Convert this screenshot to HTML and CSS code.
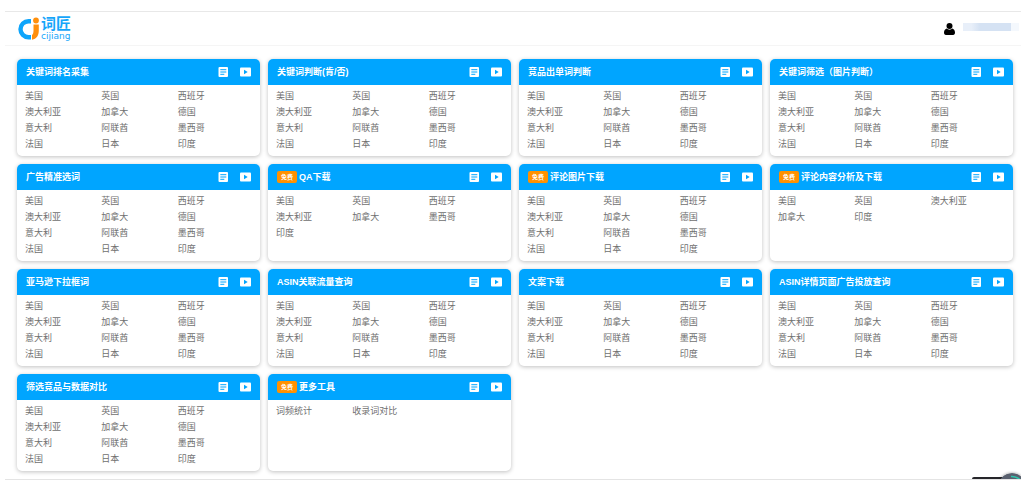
FILE: index.html
```html
<!DOCTYPE html>
<html lang="zh-CN">
<head>
<meta charset="utf-8">
<meta name="viewport" content="width=device-width, initial-scale=1">
<title>词匠</title>
<link rel="stylesheet" href="styles.css">
</head>
<body>
<div class="frame">
  <header class="topbar">
    <a class="logo" href="#" aria-label="词匠 cijiang">
      <svg class="logo-mark" viewBox="0 0 22 24" aria-hidden="true">
        <path d="M14 4.200H11.500A8 8 0 0 0 11.500 20.200H14" fill="none" stroke="#0ea5fb" stroke-width="4.400"/>
        <circle cx="19" cy="3.500" r="2.900" fill="#ff8f0c"/>
        <path d="M16.500 7.400h5.300v6c0 5-2.300 8.300-6.800 9.300v-4.600c1.100-1 1.500-2.400 1.500-4.600z" fill="#ff8f0c"/>
      </svg>
      <span class="logo-text">
        <span class="logo-name">词匠</span>
        <span class="logo-latin">cijiang</span>
      </span>
    </a>
    <div class="user">
      <svg class="user-icon" viewBox="0 0 11 12" aria-hidden="true">
        <circle cx="5.500" cy="3" r="3"/>
        <path d="M2.500 5.500C1 6.200 0 7.500 0 9.500 0 11 .6 12 2 12h7c1.400 0 2-1 2-2.500 0-2-1-3.300-2.500-4C7 7 4 7 2.500 5.500z"/>
      </svg>
      <span class="user-name"></span>
    </div>
  </header>
  <main class="tools" id="tools"></main>
  <div class="helper" aria-hidden="true">
    <span class="helper-bar"></span>
    <svg class="helper-ball" viewBox="0 0 28 28">
      <circle cx="14" cy="14" r="14" fill="#59606e"/>
      <path d="M13 3.500q6-.5 11 5" fill="none" stroke="#2fc7ae" stroke-width="1.500"/>
    </svg>
  </div>
</div>
<script src="tools.js"></script>
</body>
</html>
```
FILE: styles.css
```css
* {
  box-sizing: border-box;
}

body {
  margin: 0;
  padding: 11px 11px 0 5px;
  background: #fff;
  color: #707070;
  font: 9px/16px "Liberation Sans", "Noto Sans CJK SC", sans-serif;
}

a {
  color: inherit;
  text-decoration: none;
}

.frame {
  position: relative;
  overflow: hidden;
  border-top: 1px solid #e8e8e8;
  border-bottom: 1px solid #e4e4e4;
}

.topbar {
  display: flex;
  align-items: center;
  justify-content: space-between;
  height: 34px;
  padding: 0 2px 0 12px;
  border-bottom: 1px solid #f5f5f5;
}

.logo {
  display: flex;
  align-items: center;
  gap: 2px;
  color: #16a6fa;
}

.logo-mark {
  width: 22px;
  height: 24px;
}

.logo-text {
  display: flex;
  flex-direction: column;
}

.logo-name {
  font-size: 15px;
  font-weight: 700;
  line-height: 16px;
}

.logo-latin {
  font-family: "DejaVu Sans", sans-serif;
  font-size: 9px;
  line-height: 9px;
}

.user {
  display: flex;
  align-items: center;
  gap: 8px;
}

.user-icon {
  width: 11px;
  height: 12px;
}

.user-name {
  width: 56px;
  height: 8px;
  margin-bottom: 3px;
  background: linear-gradient(90deg, #e8eff9 0 15%, #d5e2f3 30% 86%, #f4f8fd 86%);
}

.tools {
  display: grid;
  grid-template-columns: repeat(4, 1fr);
  gap: 8px;
  padding: 13px 8px 8px 12px;
}

.card {
  overflow: hidden;
  border-radius: 5px;
  background: #fff;
  box-shadow: 0 1px 4px rgba(0, 0, 0, 0.25);
}

.card-head {
  display: flex;
  align-items: center;
  height: 26px;
  padding: 0 9px;
  background: #00a5ff;
  color: #fff;
}

.card-title {
  flex: 1;
  margin: 0;
  font-size: 9px;
  font-weight: 700;
}

.badge {
  margin-right: 2px;
  padding: 0 4px;
  border-radius: 2px;
  background: #ff9100;
  font-size: 6px;
  font-weight: 700;
  line-height: 12px;
}

.card-actions {
  display: flex;
  gap: 11px;
}

.action {
  display: flex;
}

.action svg {
  width: 11px;
  height: 10px;
}

.links {
  display: grid;
  grid-template-columns: repeat(3, 1fr);
  grid-template-rows: repeat(4, 16px);
  margin: 0;
  padding: 3px 6px 4px 8px;
  list-style: none;
}

.helper {
  position: absolute;
  right: 0;
  bottom: 0;
  width: 49px;
  height: 6px;
}

.helper-bar {
  position: absolute;
  left: 0;
  bottom: 0;
  width: 40px;
  height: 2px;
  border-radius: 2px 0 0 0;
  background: #26262a;
}

.helper-ball {
  position: absolute;
  left: 26px;
  top: 0;
  width: 28px;
  height: 28px;
  border-radius: 50%;
  box-shadow: 0 0 3px rgba(0, 0, 0, 0.4);
}
```
FILE: tools.js
```js
const all = "美国 英国 西班牙 澳大利亚 加拿大 德国 意大利 阿联酋 墨西哥 法国 日本 印度";

const tools = [
  { title: "关键词排名采集", links: all },
  { title: "关键词判断(肯/否)", links: all },
  { title: "竞品出单词判断", links: all },
  { title: "关键词筛选（图片判断）", links: all },
  { title: "广告精准选词", links: all },
  { title: "QA下载", free: true, links: "美国 英国 西班牙 澳大利亚 加拿大 墨西哥 印度" },
  { title: "评论图片下载", free: true, links: all },
  { title: "评论内容分析及下载", free: true, links: "美国 英国 澳大利亚 加拿大 印度" },
  { title: "亚马逊下拉框词", links: all },
  { title: "ASIN关联流量查询", links: all },
  { title: "文案下载", links: all },
  { title: "ASIN详情页面广告投放查询", links: all },
  { title: "筛选竞品与数据对比", links: all },
  { title: "更多工具", free: true, links: "词频统计 收录词对比" }
];

const docIcon = `<svg viewBox="0 0 11 10" aria-hidden="true"><rect x=".5" width="9.500" height="10" rx="1" fill="#fff"/><path d="M2.300 2.700h6M2.300 5h6M2.300 7.300h4" stroke="#00a5ff"/></svg>`;
const playIcon = `<svg viewBox="0 0 11 10" aria-hidden="true"><rect y=".5" width="11" height="9" rx="1" fill="#fff"/><path d="M4 2.700v4.600L7.700 5z" fill="#00a5ff"/></svg>`;

document.getElementById("tools").innerHTML = tools.map(tool => `
  <section class="card">
    <div class="card-head">
      ${tool.free ? '<span class="badge">免费</span>' : ""}
      <h2 class="card-title">${tool.title}</h2>
      <div class="card-actions">
        <a class="action" href="#" aria-label="${tool.title} 说明">${docIcon}</a>
        <a class="action" href="#" aria-label="${tool.title} 视频">${playIcon}</a>
      </div>
    </div>
    <ul class="links">
      ${tool.links.split(" ").map(name => `<li><a href="#">${name}</a></li>`).join("")}
    </ul>
  </section>`).join("");
```
